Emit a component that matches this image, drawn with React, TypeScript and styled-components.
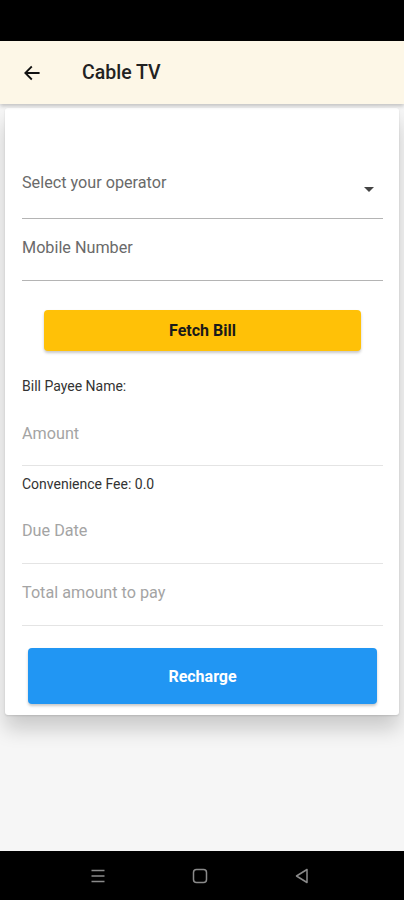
import React from "react";
import styled, { createGlobalStyle } from "styled-components";

const Global = createGlobalStyle`
  html, body { margin: 0; padding: 0; }
  body { background: #f6f6f6; font-family: Roboto, "Noto Sans", "Liberation Sans", sans-serif; }
  * { box-sizing: border-box; }
`;

const Screen = styled.div`
  display: flex;
  flex-direction: column;
  min-height: 900px;
  width: 404px;
`;

const StatusBar = styled.div`
  height: 41px;
  background: #000;
`;

const AppBar = styled.header`
  height: 63px;
  background: #fdf7e7;
  display: flex;
  align-items: center;
  padding-left: 22px;
  gap: 40px;
  box-shadow: 0 2px 4px rgba(0, 0, 0, 0.22);
  position: relative;
  z-index: 1;
`;

const Title = styled.h1`
  margin: 0;
  font-size: 19.5px;
  font-weight: 500;
  color: #222;
`;

const Main = styled.main`
  flex: 1;
  padding: 4px 5px 0;
`;

const Card = styled.section`
  background: #fff;
  border-radius: 3px;
  box-shadow: 0 1px 2px rgba(0, 0, 0, 0.12), 0 14px 20px rgba(0, 0, 0, 0.18);
  padding: 0 16px 11px 17px;
  display: flex;
  flex-direction: column;
`;

const Field = styled.div<{ $top: number; $bottom: number; $strong?: boolean }>`
  display: flex;
  align-items: flex-start;
  justify-content: space-between;
  padding-top: ${(p) => p.$top}px;
  padding-bottom: ${(p) => p.$bottom}px;
  border-bottom: 1px solid ${(p) => (p.$strong ? "#b4b4b4" : "#e4e4e4")};
`;

const Placeholder = styled.span<{ $dark?: boolean }>`
  font-size: 16.2px;
  line-height: 20px;
  color: ${(p) => (p.$dark ? "#6a6a6a" : "#a4a4a4")};
`;

const Caret = styled.span`
  width: 0;
  height: 0;
  margin: 14px 9px 0 0;
  border-left: 5px solid transparent;
  border-right: 5px solid transparent;
  border-top: 5px solid #444;
`;

const Button = styled.button<{ $variant: "amber" | "blue" }>`
  border: none;
  border-radius: 4px;
  font-family: inherit;
  font-weight: 700;
  cursor: pointer;
  margin-top: ${(p) => (p.$variant === "amber" ? 29 : 22)}px;
  margin-left: ${(p) => (p.$variant === "amber" ? 22 : 6)}px;
  margin-right: ${(p) => (p.$variant === "amber" ? 22 : 6)}px;
  height: ${(p) => (p.$variant === "amber" ? 41 : 56)}px;
  font-size: 16px;
  background: ${(p) => (p.$variant === "amber" ? "#ffc107" : "#2196f3")};
  color: ${(p) => (p.$variant === "amber" ? "#1a1a1a" : "#fff")};
  box-shadow: 0 2px 3px rgba(0, 0, 0, 0.22);
`;

const Info = styled.div<{ $top: number }>`
  margin-top: ${(p) => p.$top}px;
  font-size: 14px;
  line-height: 16px;
  color: #333;
`;

const NavBar = styled.nav`
  height: 49px;
  background: #000;
  display: flex;
  align-items: center;
  justify-content: center;
  gap: 86px;
  padding-right: 4px;
`;

const NavIcon = styled.svg`
  width: 16px;
  height: 16px;
`;

export default function App() {
  return (
    <>
      <Global />
      <Screen>
        <StatusBar />
        <AppBar>
          <svg width="20" height="20" viewBox="0 0 24 24" fill="none">
            <path d="M20 12H4.5M11 5l-7 7 7 7" stroke="#111" strokeWidth="2.2" strokeLinecap="square" />
          </svg>
          <Title>Cable TV</Title>
        </AppBar>
        <Main>
          <Card>
            <Field $top={65} $bottom={25} $strong>
              <Placeholder $dark>Select your operator</Placeholder>
              <Caret />
            </Field>
            <Field $top={19} $bottom={22} $strong>
              <Placeholder $dark>Mobile Number</Placeholder>
            </Field>
            <Button $variant="amber">Fetch Bill</Button>
            <Info $top={27}>Bill Payee Name:</Info>
            <Field $top={30} $bottom={21}>
              <Placeholder>Amount</Placeholder>
            </Field>
            <Info $top={10}>Convenience Fee: 0.0</Info>
            <Field $top={29} $bottom={22}>
              <Placeholder>Due Date</Placeholder>
            </Field>
            <Field $top={19} $bottom={22}>
              <Placeholder>Total amount to pay</Placeholder>
            </Field>
            <Button $variant="blue">Recharge</Button>
          </Card>
        </Main>
        <NavBar>
          <NavIcon viewBox="0 0 16 16" fill="none">
            <path d="M1.5 2.5h13M1.5 8h13M1.5 13.5h13" stroke="#8a8a8a" strokeWidth="1.4" />
          </NavIcon>
          <NavIcon viewBox="0 0 16 16" fill="none">
            <rect x="1.5" y="1.5" width="13" height="13" rx="3" stroke="#8a8a8a" strokeWidth="1.5" />
          </NavIcon>
          <NavIcon viewBox="0 0 16 16" fill="none">
            <path d="M13 1.5v13L2.5 8z" stroke="#8a8a8a" strokeWidth="1.5" strokeLinejoin="round" />
          </NavIcon>
        </NavBar>
      </Screen>
    </>
  );
}
